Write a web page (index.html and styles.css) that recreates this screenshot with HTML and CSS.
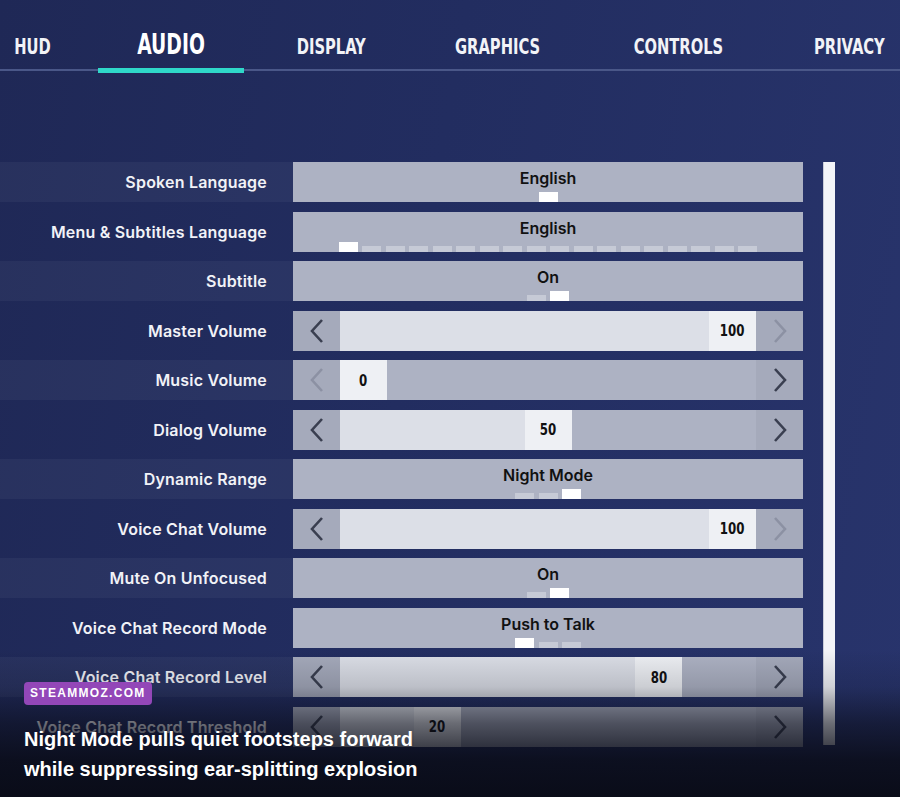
FILE: index.html
```html
<!DOCTYPE html>
<html lang="en">
<head>
    <meta charset="UTF-8">
    <meta name="viewport" content="width=device-width, initial-scale=1.0">
    <title>Settings - Audio</title>
    <link rel="stylesheet" href="styles.css">
</head>
<body>
    <header class="tabs">
        <a class="tab"><span>HUD</span></a>
        <a class="tab active"><span>AUDIO</span></a>
        <a class="tab"><span>DISPLAY</span></a>
        <a class="tab"><span>GRAPHICS</span></a>
        <a class="tab"><span>CONTROLS</span></a>
        <a class="tab"><span>PRIVACY</span></a>
    </header>

    <main class="panel">
        <div class="rows">
            <div class="row">
                <div class="label">Spoken Language</div>
                <div class="control choice">
                    <span class="value">English</span>
                    <div class="pips"><i class="on"></i></div>
                </div>
            </div>

            <div class="row">
                <div class="label">Menu &amp; Subtitles Language</div>
                <div class="control choice">
                    <span class="value">English</span>
                    <div class="pips">
                        <i class="on"></i><i></i><i></i><i></i><i></i><i></i><i></i><i></i><i></i>
                        <i></i><i></i><i></i><i></i><i></i><i></i><i></i><i></i><i></i>
                    </div>
                </div>
            </div>

            <div class="row">
                <div class="label">Subtitle</div>
                <div class="control choice">
                    <span class="value">On</span>
                    <div class="pips"><i></i><i class="on"></i></div>
                </div>
            </div>

            <div class="row">
                <div class="label">Master Volume</div>
                <div class="control slider" style="--v: 100">
                    <span class="arrow"><svg viewBox="0 0 16 26"><path d="M13 2 L3 13 L13 24"/></svg></span>
                    <div class="track"><div class="fill"><span class="num"><b>100</b></span></div></div>
                    <span class="arrow dim"><svg viewBox="0 0 16 26"><path d="M3 2 L13 13 L3 24"/></svg></span>
                </div>
            </div>

            <div class="row">
                <div class="label">Music Volume</div>
                <div class="control slider" style="--v: 0">
                    <span class="arrow dim"><svg viewBox="0 0 16 26"><path d="M13 2 L3 13 L13 24"/></svg></span>
                    <div class="track"><div class="fill"><span class="num"><b>0</b></span></div></div>
                    <span class="arrow"><svg viewBox="0 0 16 26"><path d="M3 2 L13 13 L3 24"/></svg></span>
                </div>
            </div>

            <div class="row">
                <div class="label">Dialog Volume</div>
                <div class="control slider" style="--v: 50">
                    <span class="arrow"><svg viewBox="0 0 16 26"><path d="M13 2 L3 13 L13 24"/></svg></span>
                    <div class="track"><div class="fill"><span class="num"><b>50</b></span></div></div>
                    <span class="arrow"><svg viewBox="0 0 16 26"><path d="M3 2 L13 13 L3 24"/></svg></span>
                </div>
            </div>

            <div class="row">
                <div class="label">Dynamic Range</div>
                <div class="control choice">
                    <span class="value">Night Mode</span>
                    <div class="pips"><i></i><i></i><i class="on"></i></div>
                </div>
            </div>

            <div class="row">
                <div class="label">Voice Chat Volume</div>
                <div class="control slider" style="--v: 100">
                    <span class="arrow"><svg viewBox="0 0 16 26"><path d="M13 2 L3 13 L13 24"/></svg></span>
                    <div class="track"><div class="fill"><span class="num"><b>100</b></span></div></div>
                    <span class="arrow dim"><svg viewBox="0 0 16 26"><path d="M3 2 L13 13 L3 24"/></svg></span>
                </div>
            </div>

            <div class="row">
                <div class="label">Mute On Unfocused</div>
                <div class="control choice">
                    <span class="value">On</span>
                    <div class="pips"><i></i><i class="on"></i></div>
                </div>
            </div>

            <div class="row">
                <div class="label">Voice Chat Record Mode</div>
                <div class="control choice">
                    <span class="value">Push to Talk</span>
                    <div class="pips"><i class="on"></i><i></i><i></i></div>
                </div>
            </div>

            <div class="row">
                <div class="label">Voice Chat Record Level</div>
                <div class="control slider" style="--v: 80">
                    <span class="arrow"><svg viewBox="0 0 16 26"><path d="M13 2 L3 13 L13 24"/></svg></span>
                    <div class="track"><div class="fill"><span class="num"><b>80</b></span></div></div>
                    <span class="arrow"><svg viewBox="0 0 16 26"><path d="M3 2 L13 13 L3 24"/></svg></span>
                </div>
            </div>

            <div class="row">
                <div class="label">Voice Chat Record Threshold</div>
                <div class="control slider" style="--v: 20">
                    <span class="arrow"><svg viewBox="0 0 16 26"><path d="M13 2 L3 13 L13 24"/></svg></span>
                    <div class="track"><div class="fill"><span class="num"><b>20</b></span></div></div>
                    <span class="arrow"><svg viewBox="0 0 16 26"><path d="M3 2 L13 13 L3 24"/></svg></span>
                </div>
            </div>
        </div>

        <div class="scrollbar"></div>
    </main>

    <div class="caption">
        <span class="badge">STEAMMOZ.COM</span>
        <p>Night Mode pulls quiet footsteps forward<br>while suppressing ear-splitting explosion</p>
    </div>
</body>
</html>
```

FILE: styles.css
```css
body {
    margin: 0;
    width: 900px;
    height: 797px;
    overflow: hidden;
    position: relative;
    background: linear-gradient(100deg, #1f2856 0%, #222d60 45%, #28346c 100%);
    color: #fff;
    font-family: "Inter", "Noto Sans", sans-serif;
}

/* top tab bar */
.tabs {
    box-sizing: border-box;
    height: 71px;
    display: flex;
    align-items: flex-end;
    justify-content: space-between;
    padding: 0 5px 0 9px;
    border-bottom: 2px solid #4a5788;
}

.tab {
    position: relative;
    font-family: "DejaVu Sans Condensed", "DejaVu Sans", sans-serif;
    font-stretch: condensed;
    font-weight: bold;
    font-size: 21px;
    line-height: 1;
    padding-bottom: 11px;
    color: #f2f3f7;
}

.tab span { /* squeeze the glyphs, the game font is narrower */
    display: inline-block;
    transform: scaleX(0.78);
}

.tab.active {
    font-size: 29px;
    padding-bottom: 10px;
    color: #fff;
}

.tab.active span {
    transform: scaleX(0.72);
}

.tab.active::after { /* cyan marker under the current tab */
    content: "";
    position: absolute;
    left: 50%;
    bottom: -4px;
    width: 146px;
    height: 5px;
    transform: translateX(-50%);
    background: #2fd8c9;
}

/* settings list */
.panel {
    display: flex;
    align-items: flex-start;
    padding-top: 91px;
}

.rows {
    display: flex;
    flex-direction: column;
    gap: 9.5px;
}

.row {
    display: grid;
    grid-template-columns: 293px 510px;
    height: 40px;
}

.label {
    display: flex;
    align-items: center;
    justify-content: flex-end;
    padding-right: 26px;
    font-size: 16px;
    font-weight: 600;
    letter-spacing: 0.2px;
    color: #f1f2f7;
}

.row:nth-child(odd) .label {
    background: rgba(255, 255, 255, 0.045);
}

.control {
    background: #adb2c3;
    color: #111;
}

.choice {
    display: flex;
    flex-direction: column;
    align-items: center;
    justify-content: space-between;
}

.value {
    padding-top: 6px;
    font-size: 16px;
    font-weight: 600;
    line-height: 20px;
}

.pips {
    display: flex;
    align-items: flex-end;
    gap: 4.5px;
}

.pips i {
    width: 19px;
    height: 6px;
    background: #c6cad6;
}

.pips i.on {
    height: 10px;
    background: #fff;
}

.slider {
    display: flex;
}

.arrow {
    width: 47px;
    display: flex;
    align-items: center;
    justify-content: center;
    background: #a5aabb;
}

.arrow svg {
    width: 16px;
    height: 26px;
    fill: none;
    stroke: #3a3f50;
    stroke-width: 2.6;
}

.arrow.dim svg {
    stroke: #8c91a3;
}

.track {
    flex: 1;
    display: flex;
    background: #adb2c3;
}

.fill {
    width: calc(47px + (100% - 47px) * var(--v) / 100);
    display: flex;
    justify-content: flex-end;
    background: #dcdfe7;
}

.num {
    width: 47px;
    display: flex;
    align-items: center;
    justify-content: center;
    background: #eef0f4;
    font-family: "DejaVu Sans Condensed", "DejaVu Sans", sans-serif;
    font-stretch: condensed;
    font-size: 16px;
    color: #111;
}

.num b {
    display: inline-block;
    transform: scaleX(0.82);
}

.scrollbar {
    width: 12px;
    height: 583px;
    margin-left: 20px;
    background: #f3f4f8;
    border-left: 1px solid #c9ccd8;
    box-sizing: border-box;
}

/* dark caption strip over the bottom of the list */
.caption {
    position: absolute;
    left: 0;
    right: 0;
    bottom: 0;
    height: 147px;
    box-sizing: border-box;
    padding: 31px 24px 0;
    background: linear-gradient(to bottom,
        rgba(9, 11, 22, 0) 0%,
        rgba(9, 11, 22, 0.15) 25%,
        rgba(9, 11, 22, 0.58) 50%,
        rgba(9, 11, 22, 0.88) 75%,
        rgba(9, 11, 22, 0.97) 100%);
}

.badge {
    display: inline-block;
    height: 23px;
    line-height: 23px;
    padding: 0 6px;
    border-radius: 4px;
    background: #9347b8;
    font-family: "Liberation Sans", Arial, sans-serif;
    font-weight: bold;
    font-size: 12px;
    letter-spacing: 1.3px;
}

.caption p {
    margin: 19px 0 0;
    font-family: "Liberation Sans", Arial, sans-serif;
    font-weight: bold;
    font-size: 20px;
    line-height: 30px;
}
```
